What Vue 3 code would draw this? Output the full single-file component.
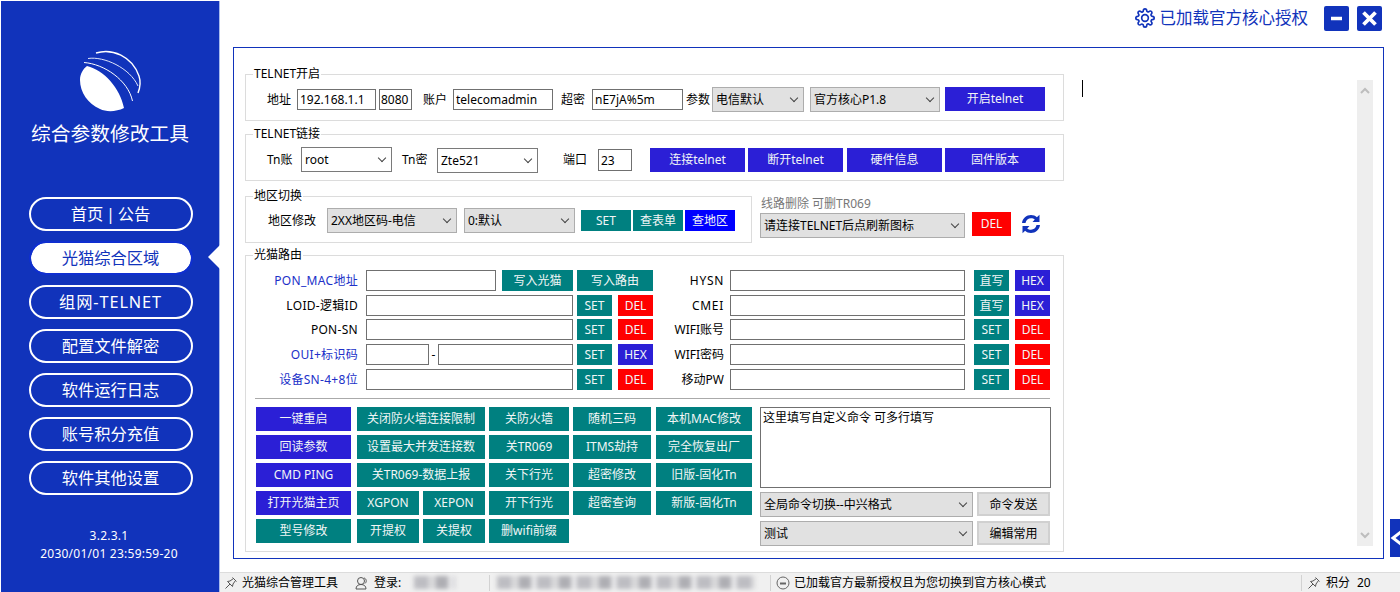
<script setup>
const nav = ['首页\u2009|\u2009公告', '光猫综合区域', '组网-TELNET', '配置文件解密', '软件运行日志', '账号积分充值', '软件其他设置']
const col2 = ['关闭防火墙连接限制', '设置最大并发连接数', '关TR069-数据上报']
const col3 = ['关防火墙', '关TR069', '关下行光', '开下行光', '删wifi前缀']
const col4 = ['随机三码', 'ITMS劫持', '超密修改', '超密查询']
const col5 = ['本机MAC修改', '完全恢复出厂', '旧版-固化Tn', '新版-固化Tn']
const col1 = ['一键重启', '回读参数', 'CMD PING', '打开光猫主页']
const command = '这里填写自定义命令 可多行填写'
</script>

<template>
  <div class="app">
    <aside class="side">
      <svg class="logo" viewBox="1 1 218 119">
        <path fill="#fff" d="M87 66C104 70 120 88 124 108C116 112 106 112 100 109C88 104 80 92 80 80C80 74 83 69 87 66Z" />
        <path fill="none" stroke="#fff" stroke-width="1" d="M84 62.500C104 64 128 80 132.500 101" />
        <path fill="none" stroke="#dfe5fa" stroke-width="1" d="M88 58.500C104 56 130 68 138 86" />
        <path fill="none" stroke="#fff" stroke-width="1.400" d="M96 53C112 48 132 56 139 76C141 82 140 88 138 93" />
      </svg>
      <h1 class="title">综合参数修改工具</h1>
      <nav class="nav">
        <a v-for="(n, i) in nav" :key="n" class="pill" :class="{ on: i === 1, latin: i === 2 }">{{ n }}</a>
      </nav>
      <i class="pointer"></i>
      <div class="ver">
        <div>3.2.3.1</div>
        <div>2030/01/01 23:59:59-20</div>
      </div>
    </aside>

    <main class="main">
      <header class="top">
        <svg class="gear" viewBox="0 0 24 24" fill="none" stroke="#1133bb" stroke-width="2">
          <circle cx="12" cy="12" r="4" />
          <path d="M19.4 15a1.65 1.65 0 0 0 .33 1.82l.06.06a2 2 0 0 1 0 2.83 2 2 0 0 1-2.83 0l-.06-.06a1.65 1.65 0 0 0-1.82-.33 1.65 1.65 0 0 0-1 1.51V21a2 2 0 0 1-2 2 2 2 0 0 1-2-2v-.09A1.65 1.65 0 0 0 9 19.4a1.65 1.65 0 0 0-1.82.33l-.06.06a2 2 0 0 1-2.83 0 2 2 0 0 1 0-2.83l.06-.06a1.65 1.65 0 0 0 .33-1.82 1.65 1.65 0 0 0-1.51-1H3a2 2 0 0 1-2-2 2 2 0 0 1 2-2h.09A1.65 1.65 0 0 0 4.6 9a1.65 1.65 0 0 0-.33-1.82l-.06-.06a2 2 0 0 1 0-2.83 2 2 0 0 1 2.83 0l.06.06a1.65 1.65 0 0 0 1.82.33H9a1.65 1.65 0 0 0 1-1.51V3a2 2 0 0 1 2-2 2 2 0 0 1 2 2v.09a1.65 1.65 0 0 0 1 1.51 1.65 1.65 0 0 0 1.82-.33l.06-.06a2 2 0 0 1 2.83 0 2 2 0 0 1 0 2.83l-.06.06a1.65 1.65 0 0 0-.33 1.82V9a1.65 1.65 0 0 0 1.51 1H21a2 2 0 0 1 2 2 2 2 0 0 1-2 2h-.09a1.65 1.65 0 0 0-1.51 1z" />
        </svg>
        <span class="auth">已加载官方核心授权</span>
        <button class="win first">
          <svg viewBox="0 0 25 25"><path d="M7 12.500H18" stroke="#fff" stroke-width="3.500" /></svg>
        </button>
        <button class="win">
          <svg viewBox="0 0 25 25"><path d="M6.500 6.500L18.500 18.500M18.500 6.500L6.500 18.500" stroke="#fff" stroke-width="3.800" /></svg>
        </button>
      </header>

      <section class="panel">
        <div class="forms">
          <fieldset class="grp">
            <legend>TELNET开启</legend>
            <div class="row r1">
              <span class="lbl w24">地址</span>
              <input class="inp mt2 w79 ml6" value="192.168.1.1" />
              <input class="inp mt2 w33 ml3 tight" value="8080" />
              <span class="lbl w24 ml11">账户</span>
              <input class="inp mt2 w100 ml6" value="telecomadmin" />
              <span class="lbl w24 ml8">超密</span>
              <input class="inp mt2 w91 ml7" value="nE7jA%5m" />
              <span class="lbl w23 ml3">参数</span>
              <div class="sel gray w92 ml3">电信默认</div>
              <div class="sel gray w130 ml6">官方核心P1.8</div>
              <button class="btn blue w100 ml5">开启telnet</button>
            </div>
          </fieldset>

          <fieldset class="grp">
            <legend>TELNET链接</legend>
            <div class="row r2">
              <span class="lbl w26">Tn账</span>
              <div class="sel w91 ml8">root</div>
              <span class="lbl w26 ml10">Tn密</span>
              <div class="sel w101 ml9 mt1">Zte521</div>
              <span class="lbl w24 ml25">端口</span>
              <input class="inp h22 mt2 w34 ml11" value="23" />
              <button class="btn blue w95 ml18 mt1">连接telnet</button>
              <button class="btn blue w95 ml3 mt1">断开telnet</button>
              <button class="btn blue w95 ml4 mt1">硬件信息</button>
              <button class="btn blue w100 ml3 mt1">固件版本</button>
            </div>
          </fieldset>

          <div class="area-row">
            <fieldset class="grp area">
              <legend>地区切换</legend>
              <div class="row r3">
                <span class="lbl w48">地区修改</span>
                <div class="sel gray w130 ml11">2XX地区码-电信</div>
                <div class="sel gray w111 ml7">0:默认</div>
                <button class="btn teal short w50 ml6 mt2">SET</button>
                <button class="btn teal short w50 ml2 mt2">查表单</button>
                <button class="btn pure short w50 ml2 mt2">查地区</button>
              </div>
            </fieldset>
            <div class="line-del">
              <div class="hint">线路删除 可删TR069</div>
              <div class="line-row">
                <div class="sel gray w205 mt1">请连接TELNET后点刷新图标</div>
                <button class="btn red w39 ml7">DEL</button>
                <svg class="refresh" viewBox="0 0 20 20" fill="#1133bb">
                  <path d="M1 9C1.500 4.500 5.500 1 10 1c2.300 0 4.400.8 5.900 2.200L18.500.8V8h-7l2.300-2.400C12.800 4.800 11.500 4.300 10 4.300 7.300 4.300 5 6.200 4.500 9z" />
                  <path d="M19 11c-.5 4.500-4.500 8-9 8-2.300 0-4.400-.8-5.900-2.200L1.500 19.200V12h7l-2.300 2.400c1 .8 2.300 1.300 3.800 1.300 2.700 0 5-1.900 5.500-4.700z" />
                </svg>
              </div>
            </div>
          </div>

          <fieldset class="grp router">
            <legend>光猫路由</legend>
            <div class="inner">
              <div class="two">
                <div class="rows">
                  <div class="frow">
                    <span class="flbl blue-t wide">PON_MAC地址</span>
                    <input class="inp w130" />
                    <button class="btn teal short w71 ml6">写入光猫</button>
                    <button class="btn teal short w76 ml4">写入路由</button>
                  </div>
                  <div class="frow">
                    <span class="flbl wide">LOID-逻辑ID</span>
                    <input class="inp w207" />
                    <button class="btn teal short w35 ml4">SET</button>
                    <button class="btn red short w35 ml6">DEL</button>
                  </div>
                  <div class="frow">
                    <span class="flbl wide">PON-SN</span>
                    <input class="inp w207" />
                    <button class="btn teal short w35 ml4">SET</button>
                    <button class="btn red short w35 ml6">DEL</button>
                  </div>
                  <div class="frow">
                    <span class="flbl blue-t wide">OUI+标识码</span>
                    <input class="inp w63" />
                    <span class="dash">-</span>
                    <input class="inp w135" />
                    <button class="btn teal short w35 ml4">SET</button>
                    <button class="btn blue short w35 ml6">HEX</button>
                  </div>
                  <div class="frow">
                    <span class="flbl blue-t wide">设备SN-4+8位</span>
                    <input class="inp w207" />
                    <button class="btn teal short w35 ml4">SET</button>
                    <button class="btn red short w35 ml6">DEL</button>
                  </div>
                </div>
                <div class="rows right">
                  <div class="frow">
                    <span class="rlbl wider">HYSN</span>
                    <input class="inp w235" />
                    <button class="btn teal short w35 ml9">直写</button>
                    <button class="btn blue short w35 ml6">HEX</button>
                  </div>
                  <div class="frow">
                    <span class="rlbl wider">CMEI</span>
                    <input class="inp w235" />
                    <button class="btn teal short w35 ml9">直写</button>
                    <button class="btn blue short w35 ml6">HEX</button>
                  </div>
                  <div class="frow">
                    <span class="rlbl">WIFI账号</span>
                    <input class="inp w235" />
                    <button class="btn teal short w35 ml9">SET</button>
                    <button class="btn red short w35 ml6">DEL</button>
                  </div>
                  <div class="frow">
                    <span class="rlbl">WIFI密码</span>
                    <input class="inp w235" />
                    <button class="btn teal short w35 ml9">SET</button>
                    <button class="btn red short w35 ml6">DEL</button>
                  </div>
                  <div class="frow">
                    <span class="rlbl">移动PW</span>
                    <input class="inp w235" />
                    <button class="btn teal short w35 ml9">SET</button>
                    <button class="btn red short w35 ml6">DEL</button>
                  </div>
                </div>
              </div>

              <hr class="rule" />

              <div class="lower">
                <div class="cmds">
                  <div class="c">
                    <button v-for="t in col1" :key="t" class="btn blue w95">{{ t }}</button>
                    <button class="btn teal w95">型号修改</button>
                  </div>
                  <div class="c w128">
                    <button v-for="t in col2" :key="t" class="btn teal w128">{{ t }}</button>
                    <div class="pair"><button class="btn teal w62">XGPON</button><button class="btn teal w62">XEPON</button></div>
                    <div class="pair"><button class="btn teal w62">开提权</button><button class="btn teal w62">关提权</button></div>
                  </div>
                  <div class="c">
                    <button v-for="t in col3" :key="t" class="btn teal w80">{{ t }}</button>
                  </div>
                  <div class="c w79">
                    <button v-for="t in col4" :key="t" class="btn teal w78">{{ t }}</button>
                  </div>
                  <div class="c">
                    <button v-for="t in col5" :key="t" class="btn teal w96">{{ t }}</button>
                  </div>
                </div>
                <div class="custom">
                  <textarea class="ta" :value="command"></textarea>
                  <div class="crow">
                    <div class="sel gray w213">全局命令切换--中兴格式</div>
                    <button class="btn ghost w73 ml4">命令发送</button>
                  </div>
                  <div class="crow">
                    <div class="sel gray w213">测试</div>
                    <button class="btn ghost w73 ml4">编辑常用</button>
                  </div>
                </div>
              </div>
            </div>
          </fieldset>
        </div>

        <div class="log">
          <div class="log-text"><i class="caret"></i></div>
          <div class="sb">
            <svg viewBox="0 0 16 12"><path d="M4 9L8 5L12 9" fill="none" stroke="#bdbdbd" stroke-width="2" /></svg>
            <svg viewBox="0 0 16 12"><path d="M4 3L8 7L12 3" fill="none" stroke="#bdbdbd" stroke-width="2" /></svg>
          </div>
        </div>
      </section>

      <div class="tab">
        <svg viewBox="0 0 10 38"><path d="M12 12L3 19L12 26" fill="none" stroke="#fff" stroke-width="3" /></svg>
      </div>

      <footer class="status">
        <svg class="si s1" viewBox="0 0 14 14" fill="none" stroke="#555"><path d="M8.500 1.500L12.500 5.500M9.500 2.500L6 5 3.500 5.500 8.500 10.500 9 8 11.500 4.500M6 8L1.500 12.500" /></svg>
        <span class="st w96">光猫综合管理工具</span>
        <svg class="si s2" viewBox="0 0 14 14" fill="none" stroke="#555"><circle cx="6" cy="5" r="3.500" /><path d="M1 13c0-3 2-4.500 5-4.500s5 1.500 5 4.500zM9 2c2.500.5 3 4 1 5.500" /></svg>
        <span class="st w28">登录:</span>
        <div class="blur b1"></div>
        <i class="sep s-a"></i>
        <div class="blur b2"></div>
        <i class="sep s-b"></i>
        <svg class="si s3" viewBox="0 0 14 14" fill="none" stroke="#666"><circle cx="7" cy="7" r="6" /><path d="M4 7.500h6" stroke-width="2" /></svg>
        <span class="st w252">已加载官方最新授权且为您切换到官方核心模式</span>
        <i class="sep s-c"></i>
        <svg class="si s4" viewBox="0 0 14 14" fill="none" stroke="#555"><path d="M8.500 1.500L12.500 5.500M9.500 2.500L6 5 3.500 5.500 8.500 10.500 9 8 11.500 4.500M6 8L1.500 12.500" /></svg>
        <span class="st w24">积分</span>
        <span class="st pts">20</span>
      </footer>
    </main>
  </div>
</template>

<style>
html, body { margin: 0; background: #fff; }
</style>

<style scoped>
.app {
  display: flex;
  width: 1400px;
  height: 592px;
  overflow: hidden;
  background: #fff;
  color: #000;
  font: 12px/18px "Noto Sans", "Noto Sans CJK SC", sans-serif;
}
.side {
  position: relative;
  flex: none;
  box-sizing: border-box;
  display: flex;
  flex-direction: column;
  align-items: center;
  width: 219px;
  height: 591px;
  margin: 1px 0 0 1px;
  background: #1133bb;
  border-right: 1px solid #a9bbec;
  color: #fff;
}
.logo { display: block; width: 218px; height: 119px; flex: none; }
.title {
  margin: 0;
  font-size: 19.75px;
  line-height: 28px;
  font-weight: 400;
  white-space: nowrap;
}
.nav { display: flex; flex-direction: column; gap: 10px; margin-top: 49px; margin-left: 1px; }
.pill {
  box-sizing: border-box;
  display: block;
  width: 164px;
  height: 34px;
  border: 2px solid #fff;
  border-radius: 17px;
  font-size: 16.3px;
  line-height: 30px;
  font-weight: 400;
  text-align: center;
  white-space: nowrap;
}
.pill.latin { letter-spacing: .9px; }
.pill.on {
  background: #fff;
  background-clip: padding-box;
  border-color: #0f2fd0;
  color: #1133bb;
}
.pointer {
  position: absolute;
  top: 244px;
  right: -1px;
  border-style: solid;
  border-width: 12.5px 12px 12.5px 0;
  border-color: transparent #fff transparent transparent;
}
.ver { margin: auto 2px 0 0; padding-bottom: 29px; text-align: center; line-height: 18px; letter-spacing: .25px; }

.main { position: relative; flex: 1; display: flex; flex-direction: column; min-width: 0; }
.top {
  flex: none;
  display: flex;
  align-items: center;
  justify-content: flex-end;
  height: 47px;
  padding: 0 18px 11px 0;
  box-sizing: border-box;
}
.gear { width: 20px; height: 20px; flex: none; }
.auth { margin-left: 5px; font-size: 16.5px; color: #1133bb; white-space: nowrap; }
.win {
  width: 25px;
  height: 25px;
  margin-left: 8px;
  padding: 0;
  border: 0;
  border-radius: 2px;
  background: #1133bb;
}
.win.first { margin-left: 16px; }
.win svg { display: block; width: 25px; height: 25px; }

.panel {
  flex: none;
  display: flex;
  box-sizing: border-box;
  width: 1151px;
  height: 512px;
  margin-left: 13px;
  padding: 17px 0 0 11px;
  border: 1px solid #1133bb;
}
.forms { flex: none; width: 820px; }
.grp {
  box-sizing: border-box;
  min-width: 0;
  width: 819px;
  margin: 0 0 4px;
  padding: 0;
  border: 1px solid #dcdcdc;
}
legend {
  margin-left: 7px;
  padding: 0 1px;
  line-height: 18px;
  white-space: nowrap;
}
.row { display: flex; align-items: flex-start; white-space: nowrap; }
.r1 { padding: 4px 0 8px 21px; }
.r2 { padding: 4px 0 7px 21px; }
.r3 { padding: 3px 0 9px 22px; }
.lbl { flex: none; line-height: 25px; }
.r2 .lbl { line-height: 26px; }

.inp {
  flex: none;
  box-sizing: border-box;
  height: 21px;
  padding: 0 2px;
  border: 1px solid #707070;
  border-radius: 0;
  background: #fff;
  color: #000;
  font: inherit;
  line-height: 19px;
  outline: none;
}
.tight { padding: 0 1px; }
.h22 { height: 22px; }
.sel {
  position: relative;
  flex: none;
  box-sizing: border-box;
  height: 25px;
  padding-left: 3px;
  border: 1px solid #7a7a7a;
  background: #fff;
  line-height: 23px;
  white-space: nowrap;
  overflow: hidden;
}
.sel::after {
  content: "";
  position: absolute;
  right: 6px;
  top: 7px;
  width: 5px;
  height: 5px;
  border-right: 1px solid #444;
  border-bottom: 1px solid #444;
  transform: rotate(45deg);
}
.sel.gray { background: #e1e1e1; border-color: #adadad; }
.btn {
  flex: none;
  box-sizing: border-box;
  height: 24px;
  padding: 0;
  border: 0;
  border-radius: 0;
  color: #f2f6f6;
  font: inherit;
  line-height: 22px;
  white-space: nowrap;
}
.short { height: 21px; line-height: 20px; }
.blue { background: #2b1fd6; }
.teal { background: #008080; }
.red { background: #f00; }
.pure { background: #00f; }
.ghost { background: #e1e1e1; border: 2px solid #d0d0d0; color: #000; }

.area-row { display: flex; margin-top: 6px; }
.grp.area { width: 507px; margin: 0 0 3px; flex: none; }
.line-del { flex: none; margin: 9px 0 0 8px; }
.hint { color: #777; line-height: 16px; padding-left: 1px; }
.line-row { display: flex; align-items: flex-start; margin-top: 0; }
.refresh { width: 20px; height: 20px; margin: 2px 0 0 10px; flex: none; }

.grp.router { margin: 0; }
.inner { padding: 6px 13px 5px 10px; }
.two { display: flex; }
.rows { display: flex; flex-direction: column; }
.rows.right { margin-left: 2px; }
.frow { display: flex; align-items: flex-start; height: 25px; white-space: nowrap; }
.frow:nth-child(2), .frow:nth-child(5) { height: 24px; }
.flbl { flex: none; box-sizing: border-box; width: 110px; padding-right: 8px; text-align: right; line-height: 21px; }
.rlbl { flex: none; box-sizing: border-box; width: 75px; padding-right: 6px; text-align: right; line-height: 21px; }
.wide { letter-spacing: .3px; }
.wider { letter-spacing: .7px; }
.blue-t { color: #2030c8; }
.dash { flex: none; width: 9px; text-align: center; line-height: 21px; }
.rule { height: 1px; margin: 5px 0 8px -1px; border: 0; background: #aaa; }
.lower { display: flex; }
.cmds { flex: none; display: flex; gap: 4px; width: 496px; }
.c { flex: none; display: flex; flex-direction: column; gap: 4px; width: auto; }
.c:first-child { width: 97px; }
.pair { display: flex; gap: 4px; }
.custom { flex: none; margin-left: 8px; }
.ta {
  display: block;
  box-sizing: border-box;
  width: 291px;
  height: 81px;
  margin: 0;
  padding: 2px;
  border: 1px solid #707070;
  border-radius: 0;
  font: inherit;
  line-height: 16px;
  resize: none;
  outline: none;
}
.crow { display: flex; align-items: flex-start; margin-top: 4px; }
.crow + .crow { margin-top: 4px; }

.log { flex: 1; display: flex; min-width: 0; height: 466px; margin: 15px 10px 0 0; }
.log-text { flex: 1; padding-left: 17px; }
.caret { display: block; width: 1px; height: 17px; background: #000; }
.sb {
  flex: none;
  display: flex;
  flex-direction: column;
  justify-content: space-between;
  width: 16px;
  background: #eee;
  padding: 4px 0;
  box-sizing: border-box;
}
.sb svg { display: block; width: 16px; height: 12px; }

.tab { position: absolute; left: 1170px; top: 519px; width: 10px; height: 38px; background: #1133bb; overflow: hidden; }
.tab svg { display: block; width: 10px; height: 38px; }

.status {
  position: relative;
  flex: none;
  box-sizing: border-box;
  display: flex;
  align-items: center;
  height: 20px;
  margin-top: 13px;
  border-top: 1px solid #dcdcdc;
  background: #f0f0f0;
  white-space: nowrap;
}
.st { flex: none; line-height: 18px; }
.si { flex: none; width: 14px; height: 14px; }
.s1 { margin-left: 4px; }
.st.w96 { width: 96px; margin-left: 4px; }
.s2 { margin-left: 17px; }
.w28 { width: 28px; margin-left: 5px; }
.blur {
  flex: none;
  height: 13px;
  filter: blur(2px);
  background: repeating-linear-gradient(90deg, #bdbdc2 0 14px, #d8d8da 14px 22px, #aeaeb3 22px 34px, #e6e6e8 34px 40px);
}
.b1 { width: 41px; margin-left: 12px; }
.sep { flex: none; width: 1px; height: 16px; background: #d2d2d2; }
.s-a { margin-left: 34px; }
.b2 { width: 258px; margin-left: 7px; }
.s-b { margin-left: 15px; }
.s3 { margin-left: 5px; }
.w252 { width: 252px; margin-left: 4px; }
.s-c { margin-left: 255px; }
.s4 { margin-left: 5px; }
.st.w24 { margin-left: 5px; }
.pts { margin-left: 7px; }

.w23 { width: 23px; }
.w24 { width: 24px; }
.w26 { width: 26px; }
.w33 { width: 33px; }
.w34 { width: 34px; }
.w35 { width: 35px; }
.w39 { width: 39px; }
.w48 { width: 48px; }
.w50 { width: 50px; }
.w62 { width: 62px; }
.w63 { width: 63px; }
.w71 { width: 71px; }
.w73 { width: 73px; }
.w76 { width: 76px; }
.w78 { width: 78px; }
.w79 { width: 79px; }
.w80 { width: 80px; }
.w91 { width: 91px; }
.w92 { width: 92px; }
.w95 { width: 95px; }
.w96 { width: 96px; }
.w100 { width: 100px; }
.w101 { width: 101px; }
.w111 { width: 111px; }
.w128 { width: 128px; }
.w130 { width: 130px; }
.w135 { width: 135px; }
.w205 { width: 205px; }
.w207 { width: 207px; }
.w213 { width: 213px; }
.w235 { width: 235px; }
.ml2 { margin-left: 2px; }
.ml3 { margin-left: 3px; }
.ml4 { margin-left: 4px; }
.ml5 { margin-left: 5px; }
.ml6 { margin-left: 6px; }
.ml7 { margin-left: 7px; }
.ml8 { margin-left: 8px; }
.ml9 { margin-left: 9px; }
.ml10 { margin-left: 10px; }
.ml11 { margin-left: 11px; }
.ml18 { margin-left: 18px; }
.ml25 { margin-left: 25px; }
.mt1 { margin-top: 1px; }
.mt2 { margin-top: 2px; }
</style>
